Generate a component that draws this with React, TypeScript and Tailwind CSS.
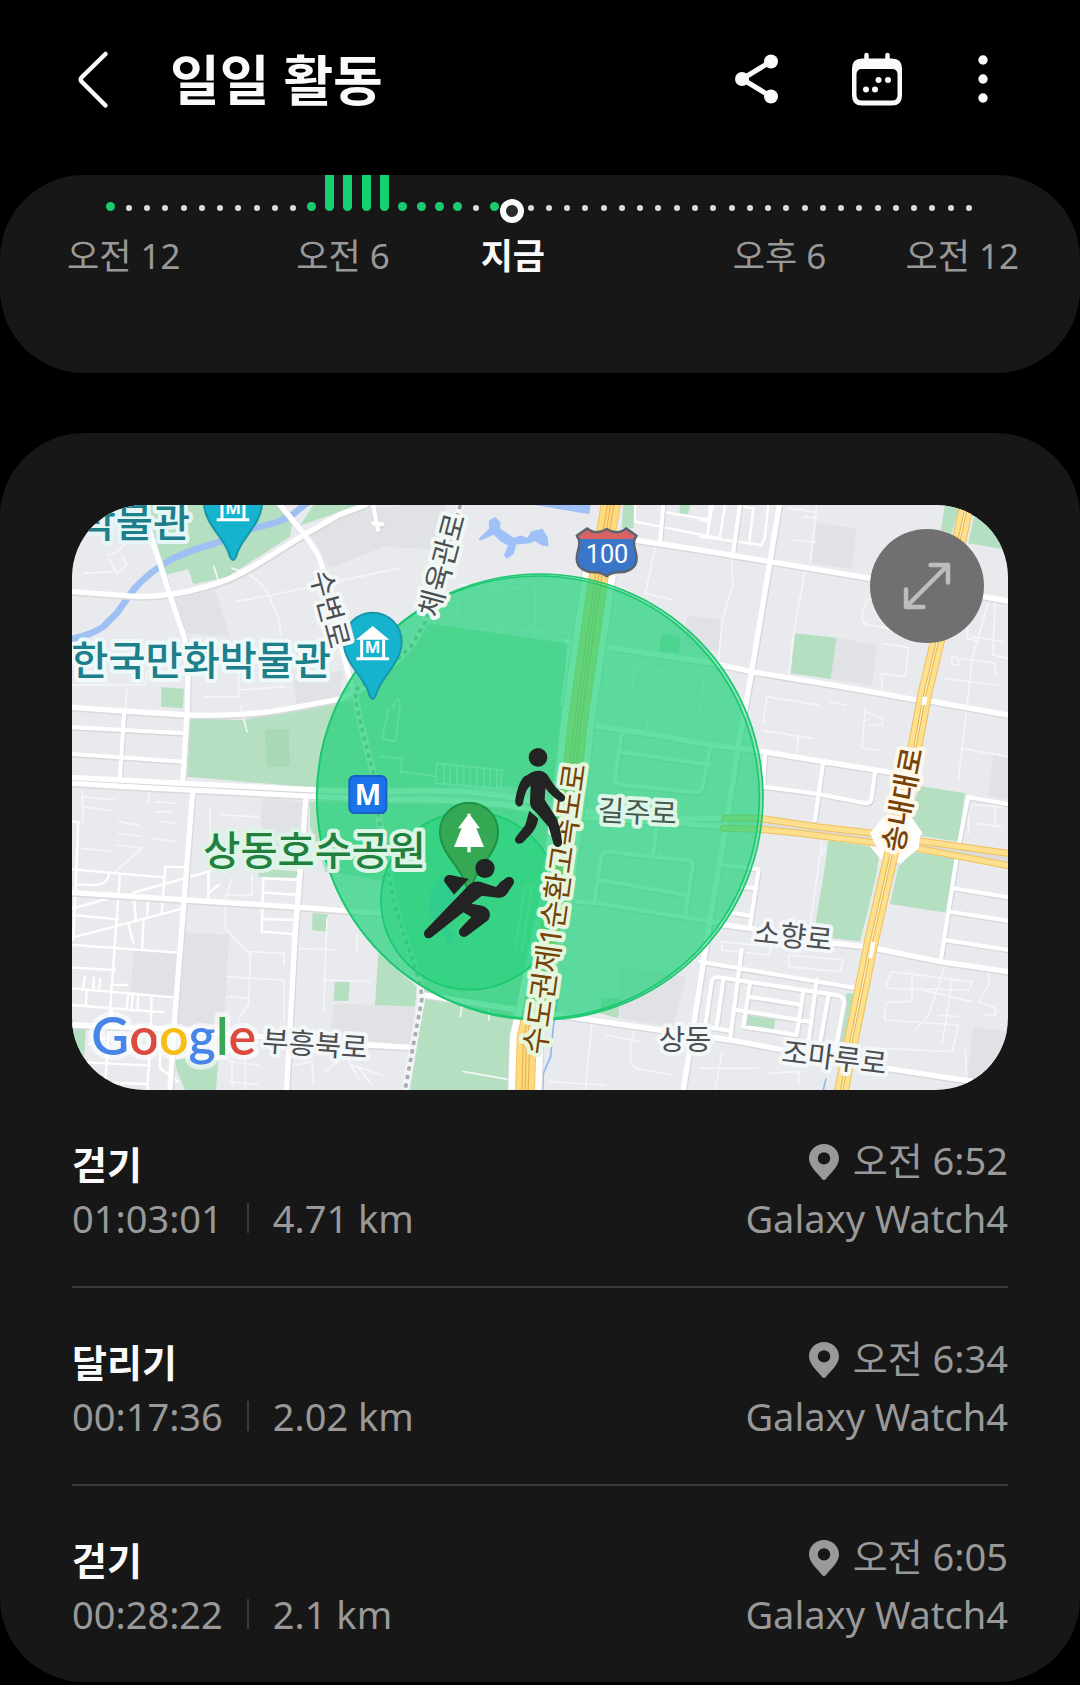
import type { ReactNode } from 'react'

type Slot = 'idle' | 'light' | 'bar' | 'now'

type Workout = {
  name: string
  duration: string
  distance: string
  time: string
  device: string
}

const LIGHT_SLOTS = [0, 11, 16, 17, 18, 19, 21]
const BAR_SLOTS = [12, 13, 14, 15]
const NOW_SLOT = 22

const slots: Slot[] = Array.from({ length: 48 }, (_, i) => {
  if (i === NOW_SLOT) return 'now'
  if (BAR_SLOTS.includes(i)) return 'bar'
  if (LIGHT_SLOTS.includes(i)) return 'light'
  return 'idle'
})

// space is the share of free width in front of the label
const axisLabels = [
  { text: '오전 12', space: 0 },
  { text: '오전 6', space: 117 },
  { text: '지금', space: 92, current: true },
  { text: '오후 6', space: 190 },
  { text: '오전 12', space: 80 },
]

const workouts: Workout[] = [
  { name: '걷기', duration: '01:03:01', distance: '4.71 km', time: '오전 6:52', device: 'Galaxy Watch4' },
  { name: '달리기', duration: '00:17:36', distance: '2.02 km', time: '오전 6:34', device: 'Galaxy Watch4' },
  { name: '걷기', duration: '00:28:22', distance: '2.1 km', time: '오전 6:05', device: 'Galaxy Watch4' },
]

const parks = [
  '229,0 259,145 282,210 349,193 364,238 464,217 654,95 660,60 620,0',
  '684,62 724,0 860,0',
  '354,640 504,645 644,625 830,590 940,500 1064,355 1484,415 1460,845 740,850 346,815',
  '714,890 1430,900 1370,1520 1050,1460 960,1130 760,1100 714,965',
  '1014,1755 1059,1475 1334,1525 1309,1755',
  '919,1345 1034,1445 1029,1505 909,1500',
  '269,547 336,551 332,610 267,605',
  '722,1223 767,1228 762,1280 720,1275',
  '789,1430 834,1430 829,1488 784,1487',
  '564,1090 679,1100 672,1118 559,1115',
  '0,1565 42,1565 34,1690 0,1660',
  '309,1660 439,1665 432,1755 339,1755 314,1695',
  '1654,0 1689,0 1684,70 1649,70',
  '1824,0 1854,0 1849,27 1822,25',
  '1769,385 1824,393 1821,445 1762,440',
  '1589,1480 1644,1480 1639,1540 1584,1525',
  '2619,0 2664,0 2639,85 2606,75',
  '2709,20 2808,60 2808,135 2689,115',
  '2169,385 2294,398 2276,522 2156,505',
  '2269,1005 2424,1030 2414,1105 2381,1245 2364,1308 2224,1295 2254,1115',
  '2544,843 2679,865 2659,1010 2534,990 2504,945',
  '2524,1040 2649,1060 2622,1223 2454,1197 2479,1085',
  '2024,1530 2109,1543 2106,1573 2022,1560',
  '2324,1465 2344,1465 2314,1615 2294,1625',
]

const blocks = [
  '299,285 429,255 474,395 344,385',
  '714,85 864,15 1000,0 1120,0 1120,135 934,125 774,190',
  '664,525 814,495 804,575 674,600',
  '2234,53 2354,70 2339,192 2219,175',
  '2294,398 2414,420 2401,542 2276,522',
  '1844,330 1954,345 1940,440 1840,420',
  '2764,745 2808,755 2808,885 2750,870',
  '572,880 699,890 684,1035 564,1015',
  '339,1283 472,1290 454,1565 314,1560',
  '184,1335 319,1345 304,1475 177,1460',
  '789,1495 1029,1507 1014,1620 774,1595',
  '1644,1385 1844,1415 1804,1565 1644,1540',
  '2704,1565 2808,1580 2808,1755 2684,1715',
]

const mainRoads = [
  'M0 260 L200 275 Q300 275 404 245 Q480 225 560 175 L704 85 L800 30 L880 0',
  'M225 55 L294 270 L338 400 L348 500 L346 615 L332 835',
  'M624 0 L699 90 L739 150 L756 200 L804 410 L840 545',
  'M0 607 L154 618 L344 630 Q520 635 644 612 L804 582 L880 545',
  'M0 817 L332 835 L740 855 L924 862 L1044 857 L1204 862 L1344 880 L1500 915 L1764 945 L1964 938',
  'M0 835 L214 848 L740 875 L930 885 Q1100 880 1300 900 L1500 935 L1964 965',
  'M1689 105 L1884 135 L2094 170 L2394 220 L2734 275 L2808 288',
  'M1484 410 L1594 425 L1924 475 L2039 500 L2324 547 L2534 585 L2584 590 L2808 630',
  'M1564 663 L1724 685 L1884 715 L2074 740 L2254 770 L2474 805',
  'M2122 0 L2094 170 L2039 500 L1999 725 L1984 825 L1954 1015 L1914 1245 L1884 1440 L1834 1755',
  'M1944 1258 L2034 1270 L2284 1315 L2384 1325 L2604 1370 L2808 1400',
  'M1054 1470 L1344 1515 L1524 1540 L1764 1575 L1974 1605 L2134 1635 L2444 1690 L2704 1730',
  'M362 860 L336 1190 L309 1525 L294 1755',
  'M702 880 L669 1295 L644 1755',
  'M0 1163 L344 1185 L684 1207 L924 1225',
  'M0 1560 L314 1573 L564 1595 L884 1620 L1014 1627',
]

const sideRoads = [
  'M0 667 L336 685',
  'M0 747 L332 770',
  'M157 622 L144 815',
  'M904 0 L918 75 M904 55 L930 58',
  'M2074 845 L2239 867 L2380 895 Q2400 895 2400 870 L2409 800',
  'M2254 770 L2239 875 L2229 945 M2079 745 L2074 845',
  'M2004 0 L1982 155 M1774 0 L1764 115',
  'M1649 685 L1629 820 Q1629 838 1650 840 L1870 862 Q1890 862 1893 840 L1916 720 M1644 740 L1914 780',
  'M1569 1185 L1587 1060 Q1590 1040 1610 1040 L1850 1067 Q1866 1068 1862 1085 L1840 1230',
  'M1584 1125 L1839 1170 M1514 1190 L1574 1195 L1944 1255 M1754 975 L1744 1045',
  'M1949 1080 L2060 1093 L2034 1265 M2000 1145 L2054 1150 M1985 1225 L2039 1233',
  'M1884 1370 L2354 1450 M2009 1335 L1974 1605',
  'M1899 1570 L1919 1430 Q1922 1415 1940 1417 L2290 1470 Q2320 1475 2316 1495 L2290 1640',
  'M2029 1475 L2189 1500 M1994 1515 L2214 1550 M2034 1435 L2014 1565 L2174 1590 L2194 1460',
  'M2234 1425 L2209 1615 M2269 1475 L2244 1615 M1954 1425 L1934 1565 M1900 1565 L1970 1577',
  'M2689 875 L2659 1025 L2606 1370 M2689 877 L2808 897 M2644 1150 L2808 1177',
  'M2634 1220 L2808 1247 M2619 1305 L2808 1335',
  'M2390 1010 L2440 1070 M2470 1070 L2540 1020 M2500 920 L2545 985',
]

const lanes = [
  'M1689 0 V50 L1944 100 M1784 23 L1909 43 M1914 0 L1907 90',
  'M1884 95 L2069 120 L2078 100 L2089 0 M2009 5 L2044 10 L2032 110 M1959 0 L1944 95 M1922 0 L1906 90 M1884 45 L1912 49',
  'M0 1093 L274 1117 M19 950 L4 1305 M0 950 H19 M144 1105 L114 1515 L99 1745 M280 1085 L269 1225 M280 1085 L344 1087',
  'M184 1163 L444 1090 M4 1297 L334 1210 M4 1210 L119 1177 M4 1230 L139 1243 M4 1320 L319 1343 M184 1163 L192 1245',
  'M228 1185 L226 1230 M215 1240 L210 1335 M168 1255 L184 1312 M110 1105 Q112 1140 60 1140 L14 1138',
  'M0 1388 L129 1395 M0 1450 L304 1477 M0 1500 L274 1522 M44 1455 L42 1500 M169 1465 L164 1515 M182 1465 L178 1517',
  'M199 1467 L196 1517 M239 1475 L236 1570 M38 1415 L34 1448 M66 1418 L64 1450 M84 1420 L82 1450 M124 1440 H166',
  'M409 1100 V1180 M409 1165 L440 1140 M574 1120 L569 1280 L679 1288 M574 1120 L684 1125 M574 1162 L679 1170 M574 1242 L674 1245',
  'M0 1670 L234 1682 M0 1730 L228 1737 M232 1655 L226 1755 M264 1600 L264 1690 L318 1730',
  'M100 1600 L50 1617 M120 1515 L117 1580',
  'M1494 415 L1469 600',
]

const footpaths = [
  'M480 190 Q560 210 590 270 L620 340 L626 390 M426 185 L440 230 M490 290 L600 270 L980 190',
  'M36 205 L120 200 M100 150 Q150 150 160 100 M110 160 L135 205 L165 180 L150 150',
  'M400 575 H500 V480 M500 555 L640 545 M505 600 L525 680 M165 555 L160 610 M0 540 H220 L226 500',
  'M30 860 L34 950 M30 875 L130 885 M30 905 L120 918 M30 1030 L120 1040 M140 950 L200 960 M140 985 L210 995 M135 1020 L210 1030 L130 1100',
  'M230 855 V895 M250 890 L310 895 M250 920 L300 920 M270 950 L310 955 M240 1000 L310 1010',
  'M414 905 V1060 M450 930 L560 935 M480 1120 L460 1180 V1270 L535 1350 L530 1500 L500 1540 M460 1170 H540 V1110',
  'M530 1340 L636 1345 V1380 M465 1415 L636 1425 V1545 M465 1475 L530 1480 M680 1330 L790 1335 M765 1240 L755 1520 M755 1425 L895 1430 M855 1290 V1340',
  'M1240 250 L1300 265 M1160 240 L1350 250 M1280 240 V370 M1390 240 V400 M1230 370 L1510 385 M1160 260 L1150 350',
  'M1650 480 L1780 500 M1690 460 L1680 560 L1620 600 M1680 580 Q1720 620 1780 610 M1725 640 V680 M1840 680 L1870 720 M1900 480 L1884 620',
  'M1724 265 L1804 285 M1754 115 L1740 170 L1720 265 M1980 160 L1982 240 L1950 350 L1940 470',
  'M2200 195 L2180 300 L2160 420 L2152 505 M2234 0 L2215 170 M2154 10 L2230 22 M2160 105 L2230 112 M2194 35 L2234 40',
  'M2430 265 Q2370 280 2370 340 Q2370 360 2400 362 L2450 370 M2430 415 L2510 428 L2500 515 L2425 505 M2430 515 V560',
  'M2084 575 L2240 600 M2084 575 L2074 655 M2074 677 L2220 700 M2180 695 L2174 745 M2274 590 L2320 600 M2380 610 L2370 730 L2420 735 M2380 620 L2430 640 V660 H2390',
  'M2694 260 L2684 400 L2720 410 M2750 290 L2700 460 M2770 290 L2762 450 L2808 460 M2700 395 L2790 410 M2640 455 V480 H2660 V460 Z M2668 460 L2770 475 V510 M2620 520 L2780 540 M2700 470 L2670 730 L2660 820 M2668 730 L2808 755',
  'M2250 1010 L2210 1290 M2260 1030 L2250 1050 M1950 1310 L2100 1325 L2090 1350 L1950 1335 Z M2150 1350 L2314 1365 L2304 1400 L2150 1385 Z',
  'M2460 1400 L2700 1430 L2690 1455 L2450 1450 Q2435 1440 2460 1400 M2520 1400 L2520 1490 L2450 1490 Q2435 1500 2440 1545 L2660 1560 L2640 1640 L2440 1630',
  'M2620 1380 L2570 1530 L2530 1575 M2640 1430 L2610 1620 M2530 1450 L2700 1490 M2600 1530 L2660 1535 M2750 1400 V1440 L2720 1490 L2770 1510 V1530 H2740',
  'M2690 895 V985 M2700 900 L2790 905 M2710 955 L2790 965 M2770 910 V960',
  'M1174 1700 L1320 1725 M1170 1500 L1165 1535 M1250 1510 V1545 M1560 1550 L1540 1755 M1430 1730 L1600 1740 M1690 1570 Q1660 1660 1690 1690 L1800 1710 M1600 1590 L1700 1610',
  'M1950 1640 L1930 1755 M1880 1690 L2060 1690 M2090 1705 L2180 1700 V1740 M2680 1635 L2684 1720',
  'M480 1650 V1740 M520 1660 V1755 M470 1670 L560 1680 M470 1730 L560 1740 M665 1680 L720 1670 L725 1740 M760 1700 L820 1650 L860 1720 M860 1690 L900 1740 M840 1680 L930 1710',
  'M960 610 L975 585 Q985 580 984 605 L970 710 L930 700 L950 610 M925 755 L990 760 L985 800 L1095 815',
  'M1095 775 L1290 795 L1285 850 L1090 835 Z M1115 777 V837 M1135 779 V839 M1155 781 V841 M1175 783 V843 M1195 785 V845 M1215 787 V847 M1235 789 V848 M1255 791 V849 M1275 793 V850',
  'M1360 1140 L1330 1330 M1380 1140 L1350 1335 M1360 1140 H1380',
]

const SONGNAE = 'M2684 0 L2596 410 L2559 565 L2529 725 L2456 1055 L2399 1305 L2324 1675 L2309 1755'
const EXPRESSWAY = 'M1616 0 L1580 215 L1518 645 L1504 775 L1450 1200 L1364 1600 L1359 1755'
const EXPRESSWAY_SIDE = 'M1582 205 L1518 645 L1504 775 L1450 1200 L1364 1600 L1359 1755'
const GILJU_NORTH = 'M1959 940 L2064 940 L2234 965 L2404 985 L2524 1005 L2808 1045'
const GILJU_SOUTH = 'M1954 970 L2064 973 L2184 985 L2384 1010 L2524 1028 L2808 1082'
const RAILWAY =
  'M1165 0 L1060 350 L1020 420 L970 470 L850 555 Q850 600 880 710 L905 810 L920 935 L969 1205 L1045 1440 L1050 1480 L999 1755'

function Strokes({ paths, className, width }: { paths: string[]; className: string; width: number }) {
  return (
    <g className={className} fill="none" strokeWidth={width} strokeLinecap="round" strokeLinejoin="round">
      {paths.map((d) => (
        <path key={d} d={d} />
      ))}
    </g>
  )
}

function MapLabel({
  x,
  y,
  rotate = 0,
  className,
  halo = 'stroke-[#f4f7f8]',
  size = 86,
  anchor = 'start',
  children,
}: {
  x: number
  y: number
  rotate?: number
  className: string
  halo?: string
  size?: number
  anchor?: 'start' | 'middle' | 'end'
  children: ReactNode
}) {
  return (
    <text
      transform={`translate(${x} ${y}) rotate(${rotate})`}
      fontSize={size}
      textAnchor={anchor}
      strokeWidth={24}
      strokeLinejoin="round"
      paintOrder="stroke"
      className={`${className} ${halo}`}
    >
      {children}
    </text>
  )
}

function MuseumPin({ x, y }: { x: number; y: number }) {
  return (
    <g transform={`translate(${x} ${y})`}>
      <path
        d="M0 172 C-8 172 -10 160 -14 148 C-28 104 -87 62 -87 0 A87 87 0 0 1 87 0 C87 62 28 104 14 148 C10 160 8 172 0 172 Z"
        className="fill-[#15b3cd] stroke-[#1897ab]"
        strokeWidth={6}
      />
      <path d="M-50 -6 L0 -47 L50 -6 Z" className="fill-white" />
      <path d="M-33 -6 V50 M33 -6 V50 M-49 51 H49" className="stroke-white" strokeWidth={9} fill="none" />
      <text y={34} fontSize={50} textAnchor="middle" className="fill-white font-bold">
        M
      </text>
    </g>
  )
}

function RouteMap() {
  return (
    <svg
      viewBox="0 0 2808 1755"
      role="img"
      aria-label="운동 위치 지도"
      className="block w-full rounded-[72px] bg-[#e8eaed]"
    >
      {blocks.map((points) => (
        <polygon key={points} points={points} className="fill-[#e1e2e6]" />
      ))}
      {parks.map((points) => (
        <polygon key={points} points={points} className="fill-[#b4dfc1]" />
      ))}
      <polygon points="579,675 649,672 654,783 584,787" className="fill-[#a6d9b4]" />

      {/* water */}
      <path
        d="M-10 404 Q60 390 94 365 L134 325 L184 255 Q230 200 304 160 L364 135 L444 110 L524 75 L604 55 L654 35 L710 -10"
        className="stroke-[#9fc0f3]"
        strokeWidth={20}
        fill="none"
      />
      <path
        d="M1269 40 L1282 55 L1280 72 L1324 102 L1345 95 L1368 102 L1380 82 L1410 75 L1424 100 L1426 120 L1410 118 L1390 105 L1368 112 L1330 115 L1322 145 L1305 157 L1300 150 L1312 120 L1290 108 L1265 85 L1224 103 L1255 72 L1254 50 Z"
        className="fill-[#9fc0f8] stroke-[#9fc0f8]"
        strokeWidth={7}
        strokeLinejoin="round"
      />
      <path d="M1389 0 H1556 L1552 27 L1524 23 Z" className="fill-[#9fc0f8]" />
      <path d="M1100 1120 L1130 1110 L1150 1180 L1120 1260 L1150 1290 L1130 1330 L1115 1280 L1070 1230 L1075 1160 Z" className="fill-[#9fc0f8]" />
      <path
        d="M1462 1440 L1444 1565 L1436 1655 L1414 1705 L1412 1755 M2262 1720 L2254 1755"
        className="stroke-[#8fb8f5]"
        strokeWidth={5}
        fill="none"
      />

      <Strokes paths={footpaths} className="stroke-[#f5f6f8]" width={5} />
      <Strokes paths={lanes} className="stroke-white" width={7} />
      <g transform="translate(3 4)">
        <Strokes paths={sideRoads} className="stroke-[#d6d8dc]" width={13} />
        <Strokes paths={mainRoads} className="stroke-[#d6d8dc]" width={17} />
      </g>
      <Strokes paths={sideRoads} className="stroke-white" width={12} />
      <Strokes paths={mainRoads} className="stroke-white" width={16} />

      <Strokes paths={[RAILWAY]} className="stroke-[#f4f5f6]" width={20} />
      <path d={RAILWAY} className="stroke-[#a9abaf]" strokeWidth={11} strokeDasharray="13 13" fill="none" />

      {/* arterial roads */}
      <Strokes paths={['M2064 956 L2404 998 L2524 1016 L2808 1062']} className="stroke-[#dcdcd8]" width={16} />
      <Strokes paths={[GILJU_NORTH, GILJU_SOUTH]} className="stroke-[#efbf5c]" width={21} />
      <Strokes paths={[GILJU_NORTH, GILJU_SOUTH]} className="stroke-[#fde08d]" width={15} />
      <path d="M2394 985 L2440 930 L2500 925 L2545 985 L2540 1030 L2485 1075 L2435 1070 Z" className="fill-white" />
      <Strokes paths={[SONGNAE]} className="stroke-[#efbf5c]" width={44} />
      <Strokes paths={[SONGNAE]} className="stroke-[#fde08d]" width={38} />
      <Strokes paths={[SONGNAE]} className="stroke-[#e9b44e]" width={10} />
      <Strokes paths={[SONGNAE]} className="stroke-[#fbf0c4]" width={4} />
      <path d="M2552 575 H2566 L2562 600 H2548 Z M2398 1310 L2410 1310 L2400 1360 L2390 1360 Z" className="fill-white" />
      <path d={EXPRESSWAY_SIDE} className="stroke-[#d6d8dc]" strokeWidth={106} fill="none" />
      <path d={EXPRESSWAY_SIDE} className="stroke-white" strokeWidth={100} fill="none" />
      <Strokes paths={[EXPRESSWAY]} className="stroke-[#f3c463]" width={60} />
      <Strokes paths={[EXPRESSWAY]} className="stroke-[#fdd97f]" width={54} />
      <Strokes paths={[EXPRESSWAY]} className="stroke-[#e3b04c]" width={22} />
      <Strokes paths={[EXPRESSWAY]} className="stroke-[#fdd97f]" width={16} />
      <Strokes paths={[EXPRESSWAY]} className="stroke-[#e3b04c]" width={3} />

      {/* activity areas */}
      <g className="fill-[#19d076]/43 stroke-[#1bc870]" strokeWidth={5}>
        <circle cx={1404} cy={876} r={669} />
        <circle cx={1398} cy={877} r={664} />
        <circle cx={1194} cy={1187} r={267} />
      </g>

      {/* places */}
      <g className="font-medium">
        <MapLabel x={354} y={97} anchor="end" size={121} className="fill-[#1c7f8a]" halo="stroke-[#e6f6f7]">박물관</MapLabel>
        <MapLabel x={-2} y={511} size={121} className="fill-[#1c7f8a]" halo="stroke-[#eef9fa]">한국만화박물관</MapLabel>
        <MapLabel x={394} y={1081} size={121} className="fill-[#22803f]" halo="stroke-[#dcf5e6]">상동호수공원</MapLabel>
      </g>
      <MuseumPin x={483} y={-7} />
      <MuseumPin x={902} y={410} />

      {/* street names */}
      <g className="font-normal">
        <MapLabel x={569} y={1638} rotate={4} className="fill-[#4b4f54]">부흥북로</MapLabel>
        <MapLabel x={1576} y={946} rotate={3} className="fill-[#45594f]" halo="stroke-[#dcf6e8]">길주로</MapLabel>
        <MapLabel x={1760} y={1634} className="fill-[#4b4f54]">상동</MapLabel>
        <MapLabel x={2042} y={1312} rotate={6} className="fill-[#4b4f54]">소향로</MapLabel>
        <MapLabel x={2126} y={1670} rotate={7} className="fill-[#4b4f54]">조마루로</MapLabel>
        <MapLabel x={744} y={320} rotate={75} anchor="middle" className="fill-[#4b4f54]">수변로</MapLabel>
        <MapLabel x={1140} y={188} rotate={-75} anchor="middle" className="fill-[#4b4f54]" halo="stroke-[#f0f8f4]">체육관로</MapLabel>
        <MapLabel x={1480} y={1216} rotate={-82} anchor="middle" size={90} className="fill-[#774207]" halo="stroke-[#e4f7de]">
          수도권제1순환고속도로
        </MapLabel>
        <MapLabel x={2522} y={890} rotate={-79} anchor="middle" className="fill-[#774207] font-medium" halo="stroke-[#fdf8ea]">송내대로</MapLabel>
      </g>

      <rect x={832} y={813} width={111} height={111} rx={16} className="fill-[#1a73e8] stroke-[#1860c4]" strokeWidth={6} />
      <text x={888} y={899} fontSize={84} textAnchor="middle" className="fill-white font-bold">
        M
      </text>

      <g transform="translate(1191 980)">
        <path
          d="M0 172 C-8 172 -10 160 -14 148 C-28 104 -87 62 -87 0 A87 87 0 0 1 87 0 C87 62 28 104 14 148 C10 160 8 172 0 172 Z"
          className="fill-[#34a853] stroke-[#1f9247]"
          strokeWidth={6}
        />
        <path d="M-5 -54 H5 V-48 L33 -10 H22 L45 46 H5 V62 H-5 V46 H-45 L-22 -10 H-33 L-5 -48 Z" className="fill-white" />
      </g>

      {/* route shield */}
      <g>
        <path
          d="M1546 70 C1562 86 1586 84 1604 72 C1622 84 1646 86 1662 70 L1694 92 C1676 118 1694 132 1694 160 C1694 194 1662 204 1636 202 C1620 202 1612 208 1604 214 C1596 208 1588 202 1572 202 C1546 204 1514 194 1514 160 C1514 132 1532 118 1514 92 Z"
          className="fill-[#3a76c8] stroke-[#5f6368]"
          strokeWidth={7}
          strokeLinejoin="round"
        />
        <path d="M1547 75 C1562 90 1586 88 1604 76 C1622 88 1646 90 1661 75 L1689 93 Q1683 100 1683 102 H1525 Q1525 98 1519 93 Z" className="fill-[#d96363]" />
        <text x={1605} y={173} fontSize={76} textAnchor="middle" className="fill-white font-[Roboto,sans-serif]">
          100
        </text>
      </g>

      {/* walker */}
      <g className="fill-[#232323]">
        <circle cx={1398} cy={757} r={28} />
        <path d="M1399 797 C1384 797 1372 806 1358 814 C1344 824 1334 856 1330 884 C1327 908 1350 910 1353 894 C1356 876 1362 850 1376 842 L1374 890 C1374 908 1384 914 1396 926 L1430 966 L1444 1014 C1449 1032 1472 1028 1470 1010 C1468 984 1462 962 1454 940 L1418 884 L1420 850 C1432 866 1448 880 1462 889 C1476 896 1486 878 1474 868 C1458 856 1444 840 1434 822 C1426 806 1416 797 1399 797 Z" />
        <path d="M1372 917 L1399 941 C1396 960 1388 974 1378 986 L1354 1011 C1340 1024 1322 1010 1332 996 L1360 960 Z" />
      </g>

      {/* runner */}
      <g className="fill-[#232323]">
        <circle cx={1239} cy={1090} r={29} />
        <path d="M1187 1144 Q1202 1126 1224 1130 L1272 1146 Q1278 1142 1284 1132 L1298 1122 C1314 1108 1332 1122 1324 1138 L1304 1168 Q1294 1180 1276 1178 L1230 1172 L1198 1196 L1230 1202 C1252 1208 1260 1228 1248 1246 L1186 1292 C1170 1304 1152 1286 1166 1270 L1198 1236 L1174 1222 L1080 1296 C1064 1308 1048 1290 1060 1276 Z" />
        <path d="M1190 1122 L1146 1169 L1118 1132 C1112 1118 1124 1108 1136 1110 Z" />
      </g>

      <text
        x={58}
        y={1649}
        fontSize={156}
        strokeWidth={30}
        strokeLinejoin="round"
        paintOrder="stroke"
        className="stroke-white/60 font-[Lato,sans-serif] font-semibold"
      >
        <tspan className="fill-[#4785e8]">G</tspan>
        <tspan className="fill-[#db4a3e]">o</tspan>
        <tspan className="fill-[#f5bd15]">o</tspan>
        <tspan className="fill-[#4785e8]">g</tspan>
        <tspan className="fill-[#3aa757]">l</tspan>
        <tspan className="fill-[#db4a3e]">e</tspan>
      </text>
    </svg>
  )
}

function Header() {
  return (
    <header className="flex h-[175px] items-start justify-between pt-12 pr-[75px] pl-[70px] text-[#fafafa]">
      <div className="flex items-center gap-[52px]">
        <button type="button" aria-label="뒤로" className="flex h-16 w-12 items-center justify-center">
          <svg width="48" height="64" viewBox="0 0 48 64" fill="none" stroke="currentColor" strokeWidth="4.5" strokeLinecap="round" strokeLinejoin="round">
            <path d="M35.500 6 L11.500 29.500 Q10 31.500 11.500 33.500 L35.500 57.500" />
          </svg>
        </button>
        <h1 className="text-[54px] leading-[64px] font-bold">일일 활동</h1>
      </div>
      <div className="flex items-center">
        <button type="button" aria-label="공유" className="flex h-16 w-16 items-center justify-center">
          <svg width="64" height="64" viewBox="0 0 64 64" fill="currentColor">
            <path d="M46 13.500 L17 31 L46 48.500" fill="none" stroke="currentColor" strokeWidth="5" />
            <circle cx="17" cy="31" r="7" />
            <circle cx="46" cy="13.500" r="7" />
            <circle cx="46" cy="48.500" r="7" />
          </svg>
        </button>
        <button type="button" aria-label="달력" className="ml-14 flex h-16 w-16 items-center justify-center">
          <svg width="64" height="64" viewBox="0 0 64 64" fill="currentColor">
            <path fillRule="evenodd" d="M17 10.500 H47 Q57 10.500 57 20.500 V47.500 Q57 57.500 47 57.500 H17 Q7 57.500 7 47.500 V20.500 Q7 10.500 17 10.500 Z M17 21 Q11.500 21 11.500 26.500 V47 Q11.500 52.500 17 52.500 H47 Q52.500 52.500 52.500 47 V26.500 Q52.500 21 47 21 Z" />
            <path d="M21.500 7 V14 M42.500 7 V14" stroke="currentColor" strokeWidth="4.500" strokeLinecap="round" />
            <circle cx="33.500" cy="32" r="3" />
            <circle cx="43" cy="32" r="3" />
            <circle cx="21" cy="41.500" r="3" />
            <circle cx="30" cy="41.500" r="3" />
          </svg>
        </button>
        <button type="button" aria-label="더보기" className="ml-[52px] flex h-16 w-11 items-center justify-center">
          <svg width="44" height="64" viewBox="0 0 44 64" fill="currentColor">
            <circle cx="22" cy="12" r="4.700" />
            <circle cx="22" cy="31" r="4.700" />
            <circle cx="22" cy="50" r="4.700" />
          </svg>
        </button>
      </div>
    </header>
  )
}

function SlotMark({ slot }: { slot: Slot }) {
  if (slot === 'bar') return <span className="h-9 w-full rounded-b-full bg-[#14d172]" />
  if (slot === 'light') return <span className="size-[9px] rounded-full bg-[#1bcb70]" />
  if (slot === 'now') {
    return <span className="absolute top-6 size-6 rounded-full border-[6px] border-[#fafafa] bg-[#2a2a2a]" />
  }
  return <span className="size-[6px] rounded-full bg-[#dcdcdc]" />
}

function TimelineCard() {
  return (
    <section className="h-[198px] overflow-hidden rounded-[84px] bg-[#171717]">
      <div className="flex h-9 justify-between px-[106px]">
        {slots.map((slot, i) => (
          <span key={i} className="relative flex w-[9px] flex-col items-center justify-end">
            <SlotMark slot={slot} />
          </span>
        ))}
      </div>
      <div className="mt-5 flex pr-[61px] pl-[67px] text-[35px] leading-[50px] text-[#999]">
        {axisLabels.map((label, i) => (
          <span key={i} className="contents">
            <span style={{ flexGrow: label.space }} />
            <span className={label.current ? 'font-bold text-[#fafafa]' : ''}>{label.text}</span>
          </span>
        ))}
      </div>
    </section>
  )
}

function WorkoutRow({ workout }: { workout: Workout }) {
  return (
    <li className="flex justify-between border-b-2 border-[#3a3a3a] pt-10 pb-10 text-[38px] text-[#999] last:border-b-0">
      <div className="pt-2">
        <h2 className="leading-[52px] font-bold text-[#fafafa]">{workout.name}</h2>
        <p className="flex items-center leading-[56px]">
          {workout.duration}
          <span className="mx-6 h-[30px] w-[2px] bg-[#3a3a3a]" />
          {workout.distance}
        </p>
      </div>
      <div className="text-right">
        <p className="flex items-center justify-end gap-[14px] leading-[60px]">
          <svg width="30" height="36" viewBox="0 0 30 36" fill="#999" aria-hidden="true" className="mt-1">
            <path fillRule="evenodd" d="M15 0 C23.500 0 30 6.500 30 14.500 C30 22.500 21 29.500 17 35 Q15 37 13 35 C9 29.500 0 22.500 0 14.500 C0 6.500 6.500 0 15 0 Z M15 8.200 A6.200 6.200 0 1 0 15 20.600 A6.200 6.200 0 1 0 15 8.200 Z" />
          </svg>
          {workout.time}
        </p>
        <p className="leading-[56px]">{workout.device}</p>
      </div>
    </li>
  )
}

export default function App() {
  return (
    <div className="min-h-screen bg-black font-['Noto_Sans','Noto_Sans_CJK_KR',sans-serif]">
      <Header />
      <main>
        <TimelineCard />
        <section className="mt-[60px] rounded-[84px] bg-[#171717] px-[72px] pt-[72px]">
          <div className="relative">
            <RouteMap />
            <button
              type="button"
              aria-label="지도 확대"
              className="absolute top-6 right-6 flex size-[114px] items-center justify-center rounded-full bg-[#707070] text-[#bdbdbd]"
            >
              <svg width="50" height="50" viewBox="0 0 50 50" fill="none" stroke="currentColor" strokeWidth="4.500" strokeLinecap="round" strokeLinejoin="round">
                <path d="M28.500 4 H46 V21.500 M46 4 L4 46 M4 28.500 V46 H21.500" />
              </svg>
            </button>
          </div>
          <ul>
            {workouts.map((workout) => (
              <WorkoutRow key={workout.time} workout={workout} />
            ))}
          </ul>
        </section>
      </main>
    </div>
  )
}
